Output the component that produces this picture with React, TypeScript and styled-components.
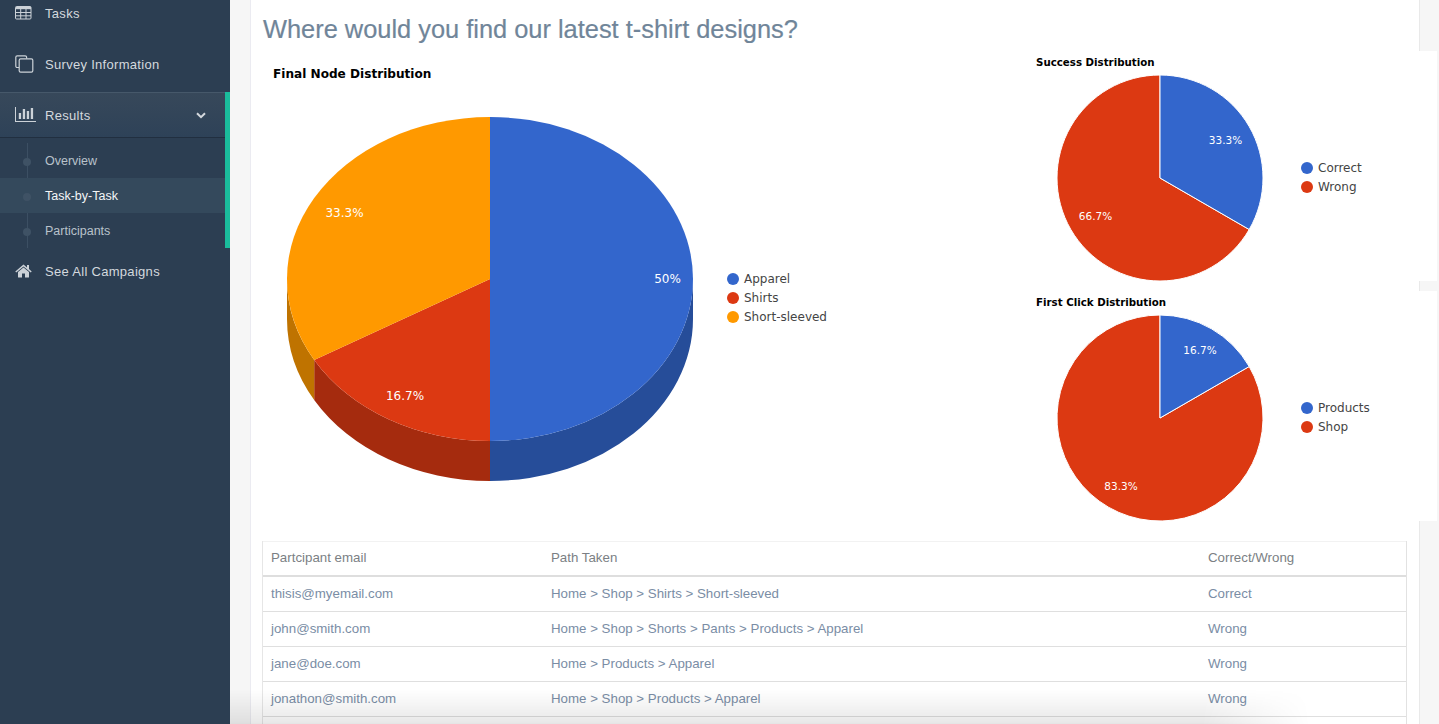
import React, { FC } from "react";
import styled, { createGlobalStyle } from "styled-components";

const GlobalStyle = createGlobalStyle`
  html, body {
    margin: 0;
    height: 100%;
    overflow: hidden;
    background: #f6f6f6;
    font-family: "Liberation Sans", Arial, sans-serif;
  }
`;

const BLUE = "#3366cc";
const RED = "#dc3912";
const ORANGE = "#ff9900";
const CHART_FONT = `"DejaVu Sans", Verdana, sans-serif`;

const Page = styled.div`
  display: flex;
  height: 724px;
  overflow: hidden;
  position: relative;
`;

const Sidebar = styled.nav`
  flex: 0 0 230px;
  height: 100%;
  background: #2c3e52;
`;

const NavList = styled.div`
  display: flex;
  flex-flow: column;
  gap: 5px;
  margin-top: -10px;
`;

const NavItem = styled.div<{ open?: boolean }>`
  display: flex;
  align-items: center;
  height: 46px;
  box-sizing: border-box;
  padding-left: 15px;
  color: #d4d9de;
  font-size: 13px;
  letter-spacing: 0.3px;
  ${({ open }) =>
    open &&
    `
    background: linear-gradient(#37485a, #2e4258);
    border-top: 1px solid #46586a;
    border-bottom: 1px solid #212f40;
  `}
`;

const NavIcon = styled.span`
  display: flex;
  flex: 0 0 30px;
  color: #ccd2d8;
`;

const Chevron = styled.svg`
  margin-left: auto;
  margin-right: 19px;
`;

const OpenGroup = styled.div`
  border-right: 5px solid #1abc9c;
`;

const SubList = styled.div`
  padding-top: 5px;
  position: relative;
  &::before {
    content: "";
    position: absolute;
    left: 27px;
    top: 5px;
    bottom: 0;
    width: 1px;
    background: #3c4f63;
  }
`;

const SubItem = styled.div<{ active?: boolean }>`
  display: flex;
  align-items: center;
  height: 35px;
  padding-left: 45px;
  position: relative;
  font-size: 12.5px;
  color: ${({ active }) => (active ? "#f4f6f7" : "#b9c2cb")};
  background: ${({ active }) => (active ? "#34495c" : "transparent")};
  &::before {
    content: "";
    position: absolute;
    left: 23px;
    top: 15px;
    width: 8px;
    height: 8px;
    border-radius: 50%;
    background: #3f5265;
  }
`;

const Main = styled.main`
  flex: 1;
  min-width: 0;
  padding: 0 20px;
`;

const Panel = styled.section`
  height: 724px;
  box-sizing: border-box;
  background: #fff;
  border-left: 1px solid #ebebf1;
  padding-left: 12px;
  box-shadow: 1px 0 0 #e9e9e9;
`;

const Heading = styled.h1`
  margin: 0;
  height: 51px;
  line-height: 58px;
  font-size: 25.4px;
  font-weight: 400;
  color: #708599;
  -webkit-text-stroke: 0.2px #708599;
`;

const ChartsRow = styled.div`
  display: flex;
  height: 470px;
  margin-bottom: 20px;
`;

const MainChart = styled.svg`
  flex: 0 0 767px;
`;

const SmallCharts = styled.div`
  flex: 0 0 407px;
  display: flex;
  flex-flow: column;
  gap: 10px;
`;

const SmallChart = styled.svg`
  display: block;
  background: #fff;
`;

const ChartTitle = styled.text<{ $size: number }>`
  font-family: ${CHART_FONT};
  font-weight: 700;
  font-size: ${({ $size }) => $size}px;
  fill: #000;
`;

const SliceLabel = styled.text<{ $size: number }>`
  font-family: ${CHART_FONT};
  font-size: ${({ $size }) => $size}px;
  fill: #fff;
  text-anchor: middle;
`;

const LegendLabel = styled.text`
  font-family: ${CHART_FONT};
  font-size: 12px;
  fill: #444;
`;

const Table = styled.table`
  width: 1145px;
  margin-left: -1px;
  table-layout: fixed;
  border-collapse: separate;
  border-spacing: 0;
  border-left: 1px solid #e6e6e6;
  border-right: 1px solid #e2e2e2;
  font-size: 13.3px;
`;

const HeadCell = styled.th`
  height: 36px;
  box-sizing: border-box;
  padding: 0 8px 2px;
  text-align: left;
  font-weight: 400;
  color: #7b7f84;
  border-top: 1px solid #f2f2f2;
  border-bottom: 2px solid #dedede;
`;

const Cell = styled.td`
  height: 35px;
  box-sizing: border-box;
  padding: 0 8px 2px;
  color: #7a8da5;
  border-bottom: 1px solid #dfdfdf;
`;

const BottomShade = styled.div`
  position: absolute;
  left: 230px;
  bottom: 0;
  width: 1080px;
  height: 34px;
  pointer-events: none;
  background: linear-gradient(transparent, rgba(0, 0, 0, 0.09));
  border-bottom: 1px solid rgba(0, 0, 0, 0.1);
  mask-image: linear-gradient(to right, #000 90%, transparent);
`;

const polar = (cx: number, cy: number, rx: number, ry: number, share: number) => ({
  x: cx + rx * Math.sin(share * 2 * Math.PI),
  y: cy - ry * Math.cos(share * 2 * Math.PI),
});

const sector = (cx: number, cy: number, rx: number, ry: number, from: number, to: number) => {
  const a = polar(cx, cy, rx, ry, from);
  const b = polar(cx, cy, rx, ry, to);
  const large = to - from > 0.5 ? 1 : 0;
  return `M${cx} ${cy}L${a.x} ${a.y}A${rx} ${ry} 0 ${large} 1 ${b.x} ${b.y}Z`;
};

const wall = (cx: number, cy: number, rx: number, ry: number, depth: number, from: number, to: number) => {
  const a = polar(cx, cy, rx, ry, from);
  const b = polar(cx, cy, rx, ry, to);
  return `M${a.x} ${a.y}A${rx} ${ry} 0 0 1 ${b.x} ${b.y}L${b.x} ${b.y + depth}A${rx} ${ry} 0 0 0 ${a.x} ${a.y + depth}Z`;
};

const Legend: FC<{ x: number; y: number; items: { label: string; color: string }[] }> = ({ x, y, items }) => (
  <g>
    {items.map(({ label, color }, index) => (
      <g key={label}>
        <circle cx={x} cy={y + index * 19} r={6} fill={color} />
        <LegendLabel x={x + 11} y={y + index * 19 + 3.5}>
          {label}
        </LegendLabel>
      </g>
    ))}
  </g>
);

const bigSlices = [
  { from: 0.25, to: 0.5, color: "#264d99" },
  { from: 0.5, to: 2 / 3, color: "#a52b0e" },
  { from: 2 / 3, to: 0.75, color: "#bf7300" },
];

const FinalNodeChart: FC = () => {
  const cx = 227;
  const cy = 228;
  const rx = 203;
  const ry = 162;
  return (
    <MainChart width={767} height={470}>
      <ChartTitle $size={12.1} x={10} y={27}>
        Final Node Distribution
      </ChartTitle>
      {bigSlices.map(({ from, to, color }) => (
        <path key={color} d={wall(cx, cy, rx, ry, 40, from, to)} fill={color} />
      ))}
      <path d={sector(cx, cy, rx, ry, 0, 0.5)} fill={BLUE} />
      <path d={sector(cx, cy, rx, ry, 0.5, 2 / 3)} fill={RED} />
      <path d={sector(cx, cy, rx, ry, 2 / 3, 1)} fill={ORANGE} />
      <SliceLabel $size={12} x={81.5} y={166}>33.3%</SliceLabel>
      <SliceLabel $size={12} x={404.5} y={232}>50%</SliceLabel>
      <SliceLabel $size={12} x={142} y={349}>16.7%</SliceLabel>
      <Legend
        x={470}
        y={228}
        items={[
          { label: "Apparel", color: BLUE },
          { label: "Shirts", color: RED },
          { label: "Short-sleeved", color: ORANGE },
        ]}
      />
    </MainChart>
  );
};

type SmallPieProps = {
  title: string;
  share: number;
  labels: { text: string; x: number; y: number }[];
  legend: string[];
};

const SmallPie: FC<SmallPieProps> = ({ title, share, labels, legend }) => {
  const cx = 130;
  const cy = 127;
  const r = 103;
  return (
    <SmallChart width={407} height={230}>
      <ChartTitle $size={10.25} x={6} y={15}>
        {title}
      </ChartTitle>
      <path d={sector(cx, cy, r, r, share, 1)} fill={RED} stroke="#fff" />
      <path d={sector(cx, cy, r, r, 0, share)} fill={BLUE} stroke="#fff" />
      {labels.map(({ text, x, y }) => (
        <SliceLabel key={text} $size={10.5} x={x} y={y}>
          {text}
        </SliceLabel>
      ))}
      <Legend
        x={277}
        y={117}
        items={[
          { label: legend[0], color: BLUE },
          { label: legend[1], color: RED },
        ]}
      />
    </SmallChart>
  );
};

const rows = [
  ["thisis@myemail.com", "Home > Shop > Shirts > Short-sleeved", "Correct"],
  ["john@smith.com", "Home > Shop > Shorts > Pants > Products > Apparel", "Wrong"],
  ["jane@doe.com", "Home > Products > Apparel", "Wrong"],
  ["jonathon@smith.com", "Home > Shop > Products > Apparel", "Wrong"],
];

const App: FC = () => (
  <Page>
    <GlobalStyle />
    <Sidebar>
      <NavList>
        <NavItem>
          <NavIcon>
            <svg width="17" height="14" viewBox="0 0 17 14" fill="none" stroke="currentColor">
              <rect x="0.5" y="0.5" width="15.5" height="12.5" rx="1" />
              <path d="M1 2h15" strokeWidth="2.4" />
              <path d="M5.700 1v12M11 1v12M1 6.500h15M1 9.800h15" />
            </svg>
          </NavIcon>
          Tasks
        </NavItem>
        <NavItem>
          <NavIcon>
            <svg width="19" height="18" viewBox="0 0 19 18" fill="none" stroke="currentColor" strokeWidth="1.2">
              <path d="M4 12.500H2.200A1.400 1.400 0 0 1 .8 11V2.200A1.400 1.400 0 0 1 2.200.8h8A1.400 1.400 0 0 1 11.600 2.200V3.500" />
              <rect x="4.200" y="3.800" width="13.600" height="13.400" rx="1.400" />
            </svg>
          </NavIcon>
          Survey Information
        </NavItem>
        <div>
          <OpenGroup>
            <NavItem open>
              <NavIcon>
                <svg width="21" height="16" viewBox="0 0 21 16" fill="currentColor">
                  <path d="M0 0h1v14h20v1H0z" />
                  <path d="M3.800 6h2.300v6H3.800zM7.800 2h2.300v10H7.800zM11.800 4h2.300v8h-2.300zM15.800 1h2.300v11h-2.300z" />
                </svg>
              </NavIcon>
              Results
              <Chevron width="10" height="7" viewBox="0 0 10 7" fill="none" stroke="#d4d9de" strokeWidth="2">
                <path d="M1 1.200l4 4 4-4" />
              </Chevron>
            </NavItem>
            <SubList>
              <SubItem>Overview</SubItem>
              <SubItem active>Task-by-Task</SubItem>
              <SubItem>Participants</SubItem>
            </SubList>
          </OpenGroup>
          <NavItem>
            <NavIcon>
              <svg width="17" height="14" viewBox="0 0 17 14" fill="currentColor">
                <path d="M3 8L8.500 3.500 14 8v5a.5.5 0 0 1-.5.5H10V9.500H7v4H3.500A.5.5 0 0 1 3 13z" />
                <path d="M.3 7.400L8.500.6 12 3.500V1h2v4l2.700 2.400-.9 1.100-7.300-6-7.300 6z" />
              </svg>
            </NavIcon>
            See All Campaigns
          </NavItem>
        </div>
      </NavList>
    </Sidebar>
    <Main>
      <Panel>
        <Heading>Where would you find our latest t-shirt designs?</Heading>
        <ChartsRow>
          <FinalNodeChart />
          <SmallCharts>
            <SmallPie
              title="Success Distribution"
              share={1 / 3}
              labels={[
                { text: "33.3%", x: 195.5, y: 93 },
                { text: "66.7%", x: 65.5, y: 169 },
              ]}
              legend={["Correct", "Wrong"]}
            />
            <SmallPie
              title="First Click Distribution"
              share={1 / 6}
              labels={[
                { text: "16.7%", x: 170, y: 63 },
                { text: "83.3%", x: 91, y: 199 },
              ]}
              legend={["Products", "Shop"]}
            />
          </SmallCharts>
        </ChartsRow>
        <Table>
          <colgroup>
            <col width={280} />
            <col width={657} />
            <col />
          </colgroup>
          <thead>
            <tr>
              <HeadCell>Partcipant email</HeadCell>
              <HeadCell>Path Taken</HeadCell>
              <HeadCell>Correct/Wrong</HeadCell>
            </tr>
          </thead>
          <tbody>
            {rows.map(([email, path, result]) => (
              <tr key={email}>
                <Cell>{email}</Cell>
                <Cell>{path}</Cell>
                <Cell>{result}</Cell>
              </tr>
            ))}
            <tr>
              <Cell />
              <Cell />
              <Cell />
            </tr>
          </tbody>
        </Table>
      </Panel>
    </Main>
    <BottomShade />
  </Page>
);

export default App;
